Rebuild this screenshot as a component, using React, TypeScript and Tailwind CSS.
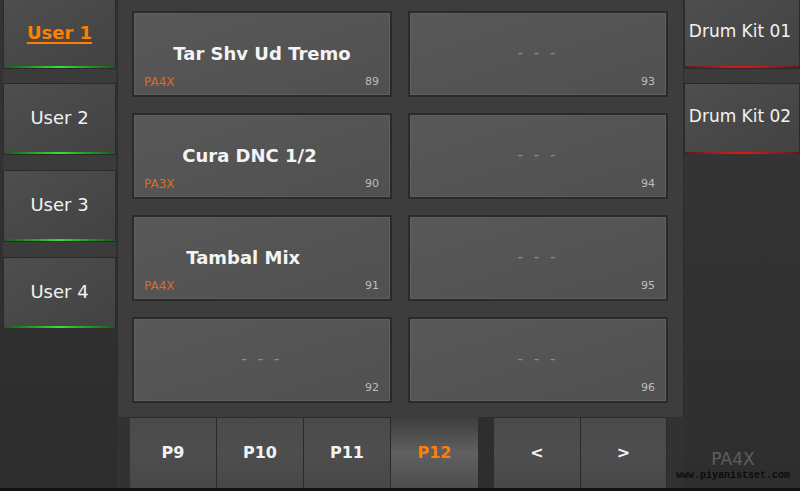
import React from 'react';

interface Slot {
  id: number;
  name?: string;
  model?: string;
}

const leftSlots: Slot[] = [
  { id: 89, name: 'Tar Shv Ud Tremo', model: 'PA4X' },
  { id: 90, name: 'Cura DNC 1/2', model: 'PA3X' },
  { id: 91, name: 'Tambal Mix', model: 'PA4X' },
  { id: 92 },
];

const rightSlots: Slot[] = [{ id: 93 }, { id: 94 }, { id: 95 }, { id: 96 }];

// interleave so the grid fills row by row
const slots: Slot[] = leftSlots.flatMap((s, i) => [s, rightSlots[i]]);

const SideButton = ({
  label,
  active = false,
  accent,
  height,
}: {
  label: string;
  active?: boolean;
  accent: 'green' | 'red';
  height: string;
}) => (
  <div className={`${height} flex flex-col border-x border-[#2b2b2b] bg-gradient-to-br from-[#4e4e4e] via-[#484848] to-[#424242]`}>
    <div className="flex-1 flex items-center justify-center pb-[2px]">
      {active ? (
        <span className="text-[18px] font-bold text-[#ff7f00] underline decoration-2 underline-offset-[3px]">{label}</span>
      ) : (
        <span className={`${accent === 'red' ? 'text-[17px] pr-[4px]' : 'text-[18px]'} text-[#f2f2f2]`}>{label}</span>
      )}
    </div>
    {accent === 'green' ? (
      <div className="h-[2px] bg-gradient-to-r from-[#1d5a1d] via-[#36e036] to-[#1d5a1d]" />
    ) : (
      <div className="h-[2px] bg-gradient-to-r from-[#5a1a1a] via-[#e81212] to-[#5a1a1a]" />
    )}
  </div>
);

const Band = ({ height }: { height: string }) => (
  <div className={`${height} border-y border-[#2a2a2a] bg-[#3b3b3b]`} />
);

const SlotCard = ({ slot }: { slot: Slot }) => (
  <div className="border-2 border-[#2a2a2a] bg-[#2a2a2a]">
    <div className="relative h-full border border-[#5f5f5f] bg-gradient-to-br from-[#585858] to-[#505050]">
      <div className="h-full flex items-center justify-center pb-[2px]">
        {slot.name ? (
          <span className="whitespace-pre text-[18px] font-bold text-[#f4f4f4]">{slot.name.padEnd(16, ' ')}</span>
        ) : (
          <span className="text-[15px] text-[#8c8c8c] tracking-[3px]">- - -</span>
        )}
      </div>
      <div className="absolute bottom-[6px] left-[9px] right-[10px] flex justify-between items-end leading-[12px]">
        <span className="text-[12px] text-[#dc6c1c]">{slot.model ?? ''}</span>
        <span className="text-[11px] text-[#bdbdbd]">{slot.id}</span>
      </div>
    </div>
  </div>
);

const Tab = ({ label, selected = false, width }: { label: string; selected?: boolean; width: string }) =>
  selected ? (
    <div className={`${width} flex items-center justify-center bg-gradient-to-b from-[#3d3d3d] via-[#606060] to-[#4e4e4e]`}>
      <span className="text-[16px] font-bold text-[#ff7f00]">{label}</span>
    </div>
  ) : (
    <div className={`${width} flex items-center justify-center border-t border-r border-[#2a2a2a] bg-gradient-to-b from-[#4a4a4a] via-[#4e4e4e] to-[#474747]`}>
      <span className="text-[16px] font-bold text-[#f2f2f2]">{label}</span>
    </div>
  );

export default function App() {
  return (
    <div className="relative w-[800px] h-[491px] overflow-hidden bg-[#323232] font-['DejaVu_Sans',sans-serif] flex flex-col">
      <div className="h-[488px] flex">
        {/* user banks */}
        <div className="w-[117px] flex flex-col pl-[3px] pr-px bg-gradient-to-b from-[#343434] to-[#2d2d2d]">
          <SideButton label="User 1" active accent="green" height="h-[68px]" />
          <Band height="h-[16px]" />
          <SideButton label="User 2" accent="green" height="h-[70px]" />
          <Band height="h-[17px]" />
          <SideButton label="User 3" accent="green" height="h-[70px]" />
          <Band height="h-[17px]" />
          <SideButton label="User 4" accent="green" height="h-[70px]" />
        </div>

        {/* slot grid + page tabs */}
        <div className="w-[567px] flex flex-col">
          <div className="h-[417px] border-l border-r border-[#2c2c2c] bg-[#3d3d3d] pt-[11px] pl-[14px] grid grid-cols-[260px_260px] auto-rows-[86px] gap-4">
            {slots.map((s) => (
              <SlotCard key={s.id} slot={s} />
            ))}
          </div>
          <div className="h-[71px] flex pl-[13px]">
            <Tab label="P9" width="w-[87px]" />
            <Tab label="P10" width="w-[87px]" />
            <Tab label="P11" width="w-[87px]" />
            <Tab label="P12" selected width="w-[87px]" />
            <div className="w-[16px] bg-[#2e2e2e]" />
            <Tab label="<" width="w-[87px]" />
            <Tab label=">" width="w-[86px]" />
          </div>
        </div>

        {/* drum kits */}
        <div className="w-[116px] flex flex-col bg-gradient-to-b from-[#373737] to-[#2e2e2e]">
          <SideButton label="Drum Kit 01" accent="red" height="h-[68px]" />
          <Band height="h-[16px]" />
          <SideButton label="Drum Kit 02" accent="red" height="h-[70px]" />
        </div>
      </div>
      <div className="h-[3px] bg-[#111]" />

      {/* watermark */}
      <div className="absolute left-[676px] top-[449px] w-[114px] flex flex-col items-center">
        <span className="text-[17px] leading-[20px] text-[#5e5e5e]">PA4X</span>
        <span className="mt-[1px] font-['Liberation_Mono',monospace] font-bold text-[10px] leading-[12px] text-[#0c0c0c]">www.piyanistset.com</span>
      </div>
    </div>
  );
}
